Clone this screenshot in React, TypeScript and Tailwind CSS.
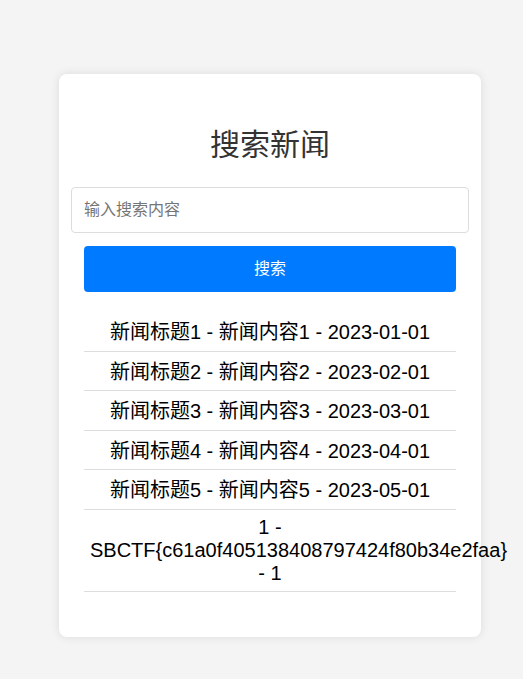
import React from 'react'

const NEWS = [
  '新闻标题1 - 新闻内容1 - 2023-01-01',
  '新闻标题2 - 新闻内容2 - 2023-02-01',
  '新闻标题3 - 新闻内容3 - 2023-03-01',
  '新闻标题4 - 新闻内容4 - 2023-04-01',
  '新闻标题5 - 新闻内容5 - 2023-05-01',
]

const FONT = { fontFamily: '"Liberation Sans", Arial, "Noto Sans CJK SC", sans-serif' }

export default function App() {
  return (
    <div className="min-h-[679px] bg-[#f4f4f4] pt-[74px] pb-10" style={FONT}>
      <div className="ml-[59px] w-[422px] rounded-lg bg-white px-[12px] pt-[51px] pb-[45px] shadow-[0_0_10px_rgba(0,0,0,0.1)]">
        <h1 className="text-center text-[30px] leading-[40px] text-[#333]">搜索新闻</h1>

        <input
          type="text"
          placeholder="输入搜索内容"
          className="mt-[22px] block h-[46px] w-full rounded-[4px] border border-[#ddd] px-[12px] text-[16px] outline-none placeholder:text-[#757575]"
        />

        <div className="px-[13px]">
          <button className="mt-[13px] h-[46px] w-full rounded-[4px] bg-[#007bff] text-[16px] text-white">
            搜索
          </button>

          <ul className="mt-[20px]">
            {NEWS.map(n => (
              <li key={n} className="border-b border-[#ddd] px-[6px] pt-[7px] pb-[5px] text-center text-[20px] leading-[26.5px] text-black">
                {n}
              </li>
            ))}
            <li className="border-b border-[#ddd] px-[6px] py-[6px] text-center text-[20px] leading-[23px] text-black">
              1 - SBCTF{'{'}c61a0f405138408797424f80b34e2faa{'}'} - 1
            </li>
          </ul>
        </div>
      </div>
    </div>
  )
}
